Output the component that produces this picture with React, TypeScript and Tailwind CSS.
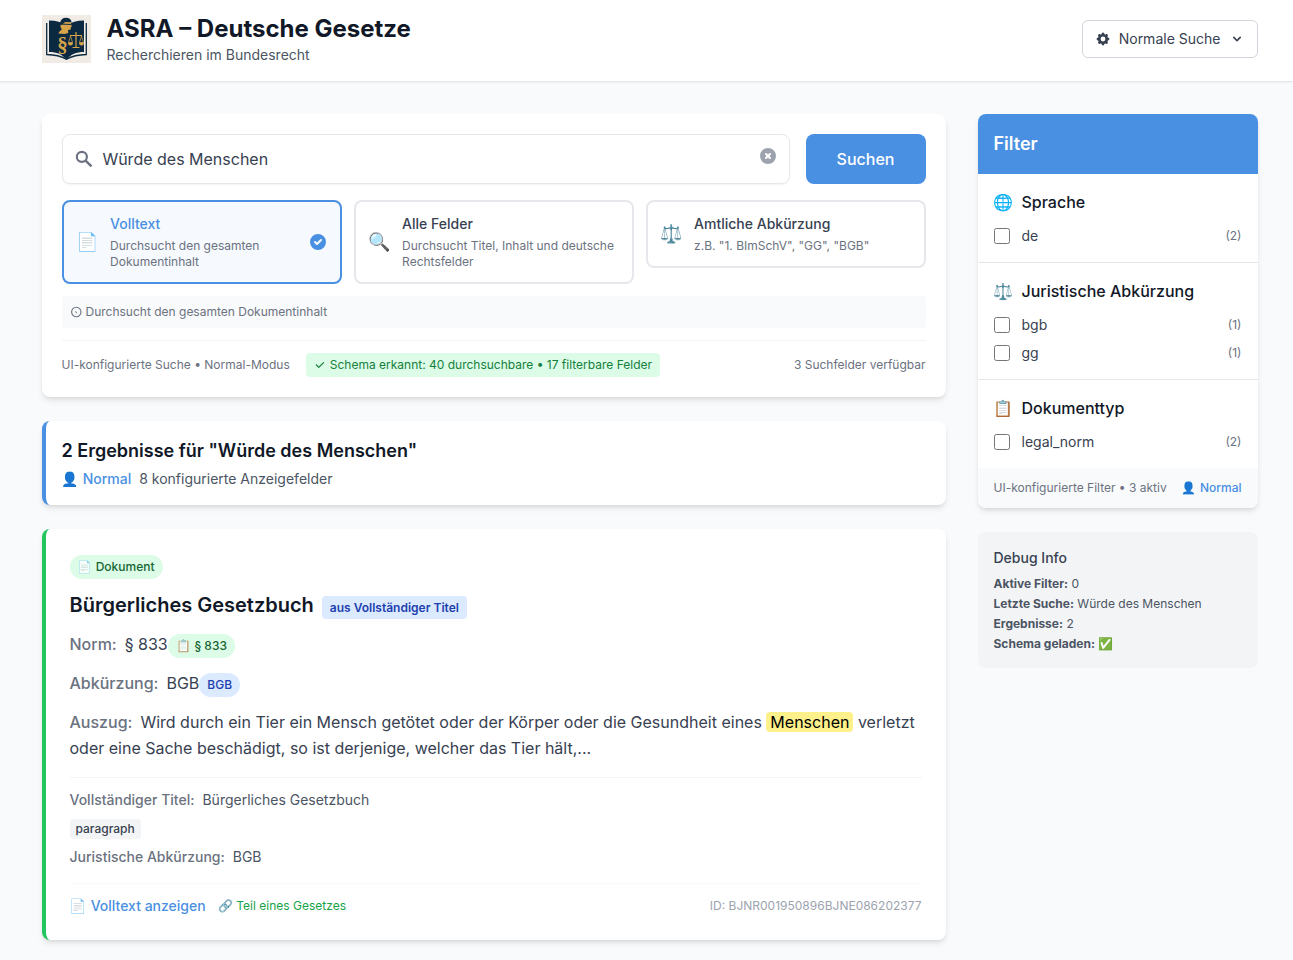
import React from "react";
import { HiCog, HiChevronDown, HiCheckCircle, HiXCircle, HiCheck } from "react-icons/hi";

function Logo() {
  return (
    <svg viewBox="0 0 49 48" className="h-12 w-[49px] shrink-0" aria-label="ASRA Logo">
      <rect width="49" height="48" fill="#f0ebe4" />
      <path d="M4.700 8v31.500c8 .2 14 1.500 19.800 4.800 5.800-3.300 11.800-4.600 19.800-4.800V8" fill="none" stroke="#0b2a42" strokeWidth="1.300" />
      <path d="M7 5.500c7 0 13 1.500 17.500 5C29 7 35 5.500 42 5.500V37c-8 0-13 2-17.500 8C20 39 15 37 7 37z" fill="#0b2a42" />
      <path d="M18.500 12c0-5 2-8 5.500-8s5 1.500 5 4.500l.8 3-1 .6v2.400l-2.800.5.3 3-4 1-6-.6c1-2 2.500-3 3.500-4.200z" fill="#d8a54a" />
      <path d="M18 8c.5-3.500 3-5.200 6-5.200s5.200 1.500 5.700 4.400l-6.500-.3-3.700 3z" fill="#0b2a42" />
      <path d="M18 9l11.500.5" stroke="#0b2a42" strokeWidth="1" />
      <text x="20.500" y="37" fontSize="21" textAnchor="middle" fontFamily="Liberation Serif, serif" fontWeight="bold" fill="#d8a54a">§</text>
      <g fill="none" stroke="#d8a54a" strokeWidth="1.200">
        <path d="M34 17v15M30.500 32.500h7M28 20.500h12" />
        <path d="M28.500 21l-2 6.500h4zM39.500 21l-2 6.500h4z" strokeWidth=".7" />
      </g>
      <path d="M26 27.500h5a2.500 3 0 0 1-5 0zM37 27.500h5a2.500 3 0 0 1-5 0z" fill="#d8a54a" />
    </svg>
  );
}

function SearchIcon() {
  return (
    <svg viewBox="0 0 24 24" className="h-[22.4px] w-[22.4px] shrink-0 text-[#6b7280]" fill="none" stroke="currentColor">
      <circle cx="9.500" cy="9.500" r="5.400" strokeWidth="2.300" />
      <path d="M13.500 13.500l6.300 6.300" strokeWidth="2.600" />
    </svg>
  );
}

type Option = { icon: string; title: string; text: string; active?: boolean };

const options: Option[] = [
  { icon: "📄", title: "Volltext", text: "Durchsucht den gesamten Dokumentinhalt", active: true },
  { icon: "🔍", title: "Alle Felder", text: "Durchsucht Titel, Inhalt und deutsche Rechtsfelder" },
  { icon: "⚖️", title: "Amtliche Abkürzung", text: 'z.B. "1. BImSchV", "GG", "BGB"' },
];

function OptionCard({ icon, title, text, active }: Option) {
  return (
    <button
      className={
        "flex items-center rounded-lg border-2 py-3 pl-[12.6px] pr-3 text-left " +
        (active ? "border-[#4a90e2] bg-[#f6f9fe]" : "border-[#e5e7eb] bg-white")
      }
    >
      <span className="mr-3 w-[22px] shrink-0 text-lg leading-7">{icon}</span>
      <span className="flex-1">
        <span className={"block text-sm font-medium leading-5 " + (active ? "text-[#4a90e2]" : "text-[#374151]")}>{title}</span>
        <span className="mt-1 block text-xs leading-4 text-[#6b7280]">{text}</span>
      </span>
      {active && <HiCheckCircle className="ml-2 h-5 w-5 shrink-0 text-[#4a90e2]" />}
    </button>
  );
}

function SearchPanel() {
  return (
    <section className="rounded-lg bg-white p-5 shadow-md">
      <div className="flex gap-4">
        <div className="flex h-[50px] flex-1 items-center rounded-lg border border-[#e5e7eb] pl-[10.5px] pr-[11px] shadow-xs">
          <SearchIcon />
          <span className="ml-[7px] flex-1 text-base text-[#374151]">Würde des Menschen</span>
          <HiXCircle className="mb-1.5 h-5 w-5 text-[#9ca3af]" />
        </div>
        <button className="h-[50px] w-[120px] rounded-lg bg-[#4a90e2] font-medium text-white">Suchen</button>
      </div>
      <div className="mt-4 grid grid-cols-3 items-start gap-3">
        {options.map((o) => (
          <OptionCard key={o.title} {...o} />
        ))}
      </div>
      <div className="mt-3 flex h-8 items-center rounded-sm bg-[#f9fafb] px-2 text-xs text-[#6b7280]">
        <svg viewBox="0 0 12 12" className="mr-1 h-3 w-3" fill="none" stroke="currentColor">
          <circle cx="6.300" cy="6" r="4.700" strokeWidth="1.100" />
          <path d="M5.600 5.300l1.200 2" />
        </svg>
        Durchsucht den gesamten Dokumentinhalt
      </div>
      <div className="mt-3 flex items-center border-t border-[#f3f4f6] pt-3 text-xs text-[#6b7280]">
        <span>UI-konfigurierte Suche • Normal-Modus</span>
        <span className="ml-4 flex h-6 items-center rounded-sm bg-[#dcfce7] px-2 text-[#15803d]">
          <HiCheck className="mr-1 h-3 w-3" />
          Schema erkannt: 40 durchsuchbare • 17 filterbare Felder
        </span>
        <span className="ml-auto">3 Suchfelder verfügbar</span>
      </div>
    </section>
  );
}

function ResultSummary() {
  return (
    <section className="h-[84px] rounded-lg border-l-4 border-[#4a90e2] bg-white px-4 pt-4 shadow-md">
      <h2 className="text-lg font-semibold leading-7 text-[#111827]">2 Ergebnisse für "Würde des Menschen"</h2>
      <p className="mt-1 text-sm leading-5 text-[#4b5563]">
        <span className="mr-2 font-medium text-[#4a90e2]">👤 Normal</span>8 konfigurierte Anzeigefelder
      </p>
    </section>
  );
}

function ResultCard() {
  return (
    <article className="h-[411px] rounded-lg border-l-4 border-[#22c55e] bg-white px-6 pt-[26px] shadow-md">
      <div className="flex">
        <span className="rounded-full bg-[#dcfce7] px-2 py-1 text-xs font-medium text-[#166534]">
          <span className="opacity-75">📄</span> Dokument
        </span>
      </div>
      <div className="mt-3 flex h-7 items-center">
        <h3 className="text-xl font-semibold leading-7 text-[#111827]">Bürgerliches Gesetzbuch</h3>
        <span className="ml-2 mt-[5px] rounded-sm bg-[#dbeafe] px-2 py-[3.5px] text-xs font-semibold text-[#1e40af]">
          aus Vollständiger Titel
        </span>
      </div>
      <div className="mt-3 flex h-7 text-[#374151]">
        <span className="mr-2 font-medium leading-[27px] text-[#6b7280]">Norm:</span>
        <span className="leading-[27px]">§ 833</span>
        <span className="mt-[3px] h-6 rounded-full bg-[#dcfce7] py-1 pl-[8.5px] pr-2 text-xs font-medium text-[#166534]">
          <span className="opacity-75">📋</span> § 833
        </span>
      </div>
      <div className="mt-[11px] flex h-7 text-[#374151]">
        <span className="mr-2 font-medium leading-[27px] text-[#6b7280]">Abkürzung:</span>
        <span className="leading-[27px]">BGB</span>
        <span className="mt-[3px] h-6 rounded-full bg-[#dbeafe] px-2 py-1 text-xs font-medium text-[#1e40af]">BGB</span>
      </div>
      <p className="mt-[11px] leading-[26px] text-[#374151]">
        <span className="mr-2 font-medium text-[#6b7280]">Auszug:</span>
        Wird durch ein Tier ein Mensch getötet oder der Körper oder die Gesundheit eines{" "}
        <mark className="rounded-sm bg-[#fef08a] px-1 text-black">Menschen</mark> verletzt oder eine Sache beschädigt, so ist
        derjenige, welcher das Tier hält,...
      </p>
      <div className="mt-4 border-t border-[#f3f4f6] pt-3 text-sm leading-5 text-[#4b5563]">
        <div>
          <span className="mr-2 font-medium text-[#6b7280]">Vollständiger Titel:</span>Bürgerliches Gesetzbuch
        </div>
        <div className="mt-[9px] flex">
          <span className="rounded-sm bg-[#f3f4f6] px-1.5 py-0.5 text-xs font-medium text-[#374151]">paragraph</span>
        </div>
        <div className="mt-2">
          <span className="mr-2 font-medium text-[#6b7280]">Juristische Abkürzung:</span>BGB
        </div>
      </div>
      <div className="mt-4 flex items-center border-t border-[#f9fafb] pt-3 text-xs">
        <a className="text-sm font-medium leading-5 text-[#4a90e2]">📄 Volltext anzeigen</a>
        <span className="ml-[12.3px] text-[#16a34a]">🔗 Teil eines Gesetzes</span>
        <span className="ml-auto text-[#9ca3af]">ID: BJNR001950896BJNE086202377</span>
      </div>
    </article>
  );
}

const groups = [
  { icon: "🌐", title: "Sprache", items: [["de", "(2)"]] },
  { icon: "⚖️", title: "Juristische Abkürzung", items: [["bgb", "(1)"], ["gg", "(1)"]] },
  { icon: "📋", title: "Dokumenttyp", items: [["legal_norm", "(2)"]] },
];

function FilterPanel() {
  return (
    <section className="overflow-hidden rounded-lg bg-white shadow-md">
      <h2 className="flex h-[60px] items-center bg-[#4a90e2] px-4 text-lg font-semibold text-white">Filter</h2>
      {groups.map((g) => (
        <div key={g.title} className="border-b border-[#e5e7eb] px-4 pb-3.5 pt-4 nth-[4]:border-b-0">
          <h3 className="flex h-6 items-center font-medium text-[#111827]">
            <span className="mr-2 w-5">{g.icon}</span>
            {g.title}
          </h3>
          <div className="mt-2.5 flex flex-col gap-1">
            {g.items.map(([name, count]) => (
              <label key={name} className="flex h-6 items-center text-sm text-[#374151]">
                <span className="mr-3 h-4 w-4 rounded-[2.5px] border border-[#767676] bg-white" />
                {name}
                <span className="ml-auto text-xs text-[#6b7280]">{count}</span>
              </label>
            ))}
          </div>
        </div>
      ))}
      <div className="flex h-10 items-center justify-between bg-[#f9fafb] px-4 text-xs text-[#6b7280]">
        <span>UI-konfigurierte Filter • 3 aktiv</span>
        <span className="font-medium text-[#4a90e2]">👤 Normal</span>
      </div>
    </section>
  );
}

function DebugPanel() {
  return (
    <section className="h-[136px] rounded-lg bg-[#f3f4f6] p-4 text-xs leading-4 text-[#4b5563]">
      <h4 className="mb-2 text-sm font-medium leading-5 text-[#374151]">Debug Info</h4>
      <div className="flex flex-col gap-1">
        <div><strong>Aktive Filter:</strong> 0</div>
        <div><strong>Letzte Suche:</strong> Würde des Menschen</div>
        <div><strong>Ergebnisse:</strong> 2</div>
        <div><strong>Schema geladen:</strong> ✅</div>
      </div>
    </section>
  );
}

export default function App() {
  return (
    <div className="h-[960px] w-[1293px] overflow-hidden bg-[#f9fafb] font-['Inter','Noto_Color_Emoji',sans-serif]">
      <header className="h-[82px] border-b border-[#e5e7eb] bg-white pl-[41.5px] pr-[35.5px] shadow-xs">
        <div className="flex items-start justify-between pt-[15px]">
          <div className="flex">
            <Logo />
            <div className="ml-4 -mt-0.5">
              <h1 className="text-2xl font-bold leading-8 text-[#111827]">ASRA – Deutsche Gesetze</h1>
              <p className="text-sm leading-5 text-[#4b5563]">Recherchieren im Bundesrecht</p>
            </div>
          </div>
          <button className="mt-[5px] flex h-[38px] w-44 items-center rounded-md border border-[#d1d5db] bg-white px-3 text-sm text-[#374151]">
            <HiCog className="mr-[8.2px] h-4 w-4" />
            Normale Suche
            <HiChevronDown className="ml-auto h-4 w-4" />
          </button>
        </div>
      </header>
      <main className="flex items-start gap-8 pl-[41.5px] pr-[35.5px] pt-8">
        <div className="flex w-[904px] flex-col gap-6">
          <SearchPanel />
          <ResultSummary />
          <ResultCard />
        </div>
        <aside className="flex w-[280px] flex-col gap-6">
          <FilterPanel />
          <DebugPanel />
        </aside>
      </main>
    </div>
  );
}
